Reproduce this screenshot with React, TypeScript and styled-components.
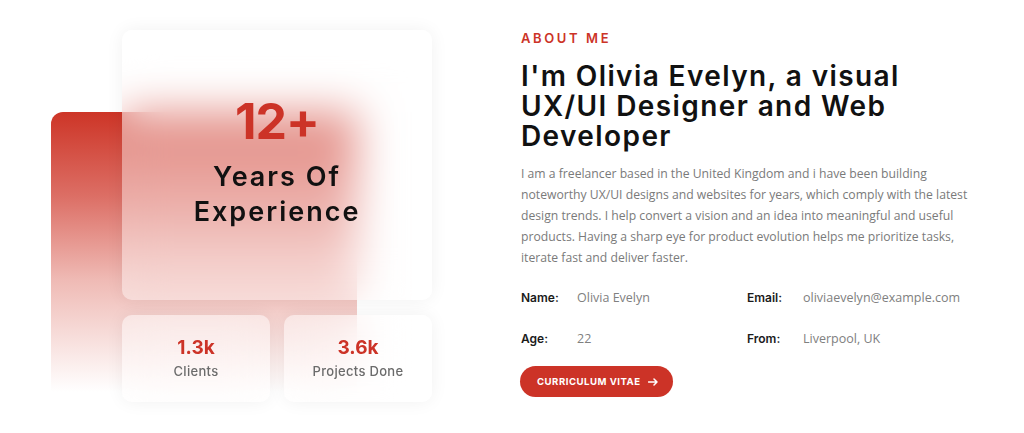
import React from 'react'
import styled, { createGlobalStyle } from 'styled-components'

const RED = '#cc3327'

const GlobalStyle = createGlobalStyle`
  html, body {
    margin: 0;
    padding: 0;
    background: #ffffff;
  }
  body {
    font-family: Inter, 'Noto Sans', sans-serif;
    -webkit-font-smoothing: antialiased;
  }
`

const Section = styled.section`
  display: flex;
  align-items: flex-start;
  gap: 89px;
  width: 1024px;
  height: 433px;
  padding: 30px 0 0 122px;
  box-sizing: border-box;
  overflow: hidden;
`

const Visual = styled.div`
  position: relative;
  width: 310px;
  display: flex;
  flex-direction: column;
  gap: 15px;
`

// decorative red slab sitting behind the frosted cards
const RedBlock = styled.div`
  position: absolute;
  left: -71px;
  top: 82px;
  width: 306px;
  height: 280px;
  border-radius: 12px 0 0 0;
  background: linear-gradient(
    180deg,
    #cd3527 0%,
    rgba(214, 85, 74, 0.85) 30%,
    rgba(226, 130, 120, 0.55) 60%,
    rgba(255, 255, 255, 0) 100%
  );
  z-index: 0;
`

const Glass = styled.div`
  position: relative;
  z-index: 1;
  background: rgba(255, 255, 255, 0.42);
  backdrop-filter: blur(22px);
  -webkit-backdrop-filter: blur(22px);
  border-radius: 10px;
  box-shadow: 0 0 18px rgba(0, 0, 0, 0.06);
  display: flex;
  flex-direction: column;
  align-items: center;
  justify-content: center;
  text-align: center;
`

const MainCard = styled(Glass)`
  height: 270px;
  padding-bottom: 5px;
  box-sizing: border-box;
`

const BigNumber = styled.div`
  font-family: Inter, sans-serif;
  font-weight: 700;
  font-size: 50px;
  line-height: 1;
  letter-spacing: -1px;
  color: ${RED};
  margin-bottom: 13px;
`

const BigLabel = styled.div`
  font-family: Inter, sans-serif;
  font-weight: 600;
  font-size: 27px;
  line-height: 35px;
  letter-spacing: 2px;
  color: #111111;
`

const StatsRow = styled.div`
  display: grid;
  grid-template-columns: 148px 148px;
  gap: 14px;
`

const StatCard = styled(Glass)`
  height: 87px;
  gap: 3px;
`

const StatValue = styled.div`
  font-family: Inter, sans-serif;
  font-weight: 700;
  font-size: 19px;
  line-height: 22px;
  color: ${RED};
`

const StatLabel = styled.div`
  font-family: Inter, sans-serif;
  font-weight: 500;
  font-size: 13px;
  line-height: 18px;
  letter-spacing: 0.3px;
  color: #6b6b6b;
`

const About = styled.div`
  display: flex;
  flex-direction: column;
  width: 455px;
`

const Eyebrow = styled.div`
  font-family: Inter, sans-serif;
  font-weight: 600;
  font-size: 13px;
  letter-spacing: 2.6px;
  color: ${RED};
  line-height: 16px;
`

const Heading = styled.h2`
  margin: 15px 0 0;
  font-family: Inter, sans-serif;
  font-weight: 600;
  font-size: 28px;
  line-height: 30px;
  letter-spacing: 1.4px;
  color: #111111;
`

const Body = styled.p`
  margin: 12px 0 0;
  font-family: 'Open Sans', sans-serif;
  font-size: 12.2px;
  line-height: 21px;
  color: #7a7a7a;
`

const InfoGrid = styled.div`
  display: grid;
  grid-template-columns: 226px 226px;
  row-gap: 23px;
  margin-top: 21px;
`

const InfoItem = styled.div`
  display: flex;
  align-items: center;
  line-height: 18px;
`

const InfoLabel = styled.span`
  width: 56px;
  font-family: Inter, sans-serif;
  font-weight: 600;
  font-size: 12px;
  color: #1b1b1b;
`

const InfoValue = styled.span`
  font-family: 'Open Sans', sans-serif;
  font-size: 12.5px;
  color: #808080;
`

const CvButton = styled.button`
  align-self: flex-start;
  margin-top: 18px;
  margin-left: -1px;
  height: 31px;
  padding: 0 15px 0 17px;
  border: none;
  border-radius: 16px;
  background: ${RED};
  color: #ffffff;
  font-family: Inter, sans-serif;
  font-weight: 700;
  font-size: 9.6px;
  letter-spacing: 0.5px;
  display: flex;
  align-items: center;
  gap: 7px;
  cursor: pointer;
`

const info = [
  { label: 'Name:', value: 'Olivia Evelyn' },
  { label: 'Email:', value: 'oliviaevelyn@example.com' },
  { label: 'Age:', value: '22' },
  { label: 'From:', value: 'Liverpool, UK' },
]

export default function App() {
  return (
    <>
      <GlobalStyle />
      <Section>
        <Visual>
          <RedBlock />
          <MainCard>
            <BigNumber>12+</BigNumber>
            <BigLabel>
              Years Of
              <br />
              Experience
            </BigLabel>
          </MainCard>
          <StatsRow>
            <StatCard>
              <StatValue>1.3k</StatValue>
              <StatLabel>Clients</StatLabel>
            </StatCard>
            <StatCard>
              <StatValue>3.6k</StatValue>
              <StatLabel>Projects Done</StatLabel>
            </StatCard>
          </StatsRow>
        </Visual>

        <About>
          <Eyebrow>ABOUT ME</Eyebrow>
          <Heading>
            I'm Olivia Evelyn, a visual
            <br />
            UX/UI Designer and Web
            <br />
            Developer
          </Heading>
          <Body>
            I am a freelancer based in the United Kingdom and i have been building noteworthy
            UX/UI designs and websites for years, which comply with the latest design trends. I
            help convert a vision and an idea into meaningful and useful products. Having a sharp
            eye for product evolution helps me prioritize tasks, iterate fast and deliver faster.
          </Body>
          <InfoGrid>
            {info.map((item) => (
              <InfoItem key={item.label}>
                <InfoLabel>{item.label}</InfoLabel>
                <InfoValue>{item.value}</InfoValue>
              </InfoItem>
            ))}
          </InfoGrid>
          <CvButton>
            CURRICULUM VITAE
            <svg width="10" height="8" viewBox="0 0 10 8" fill="none">
              <path d="M0.5 4H9M6 1L9 4L6 7" stroke="#fff" strokeWidth="1.5" strokeLinecap="round" strokeLinejoin="round" />
            </svg>
          </CvButton>
        </About>
      </Section>
    </>
  )
}
